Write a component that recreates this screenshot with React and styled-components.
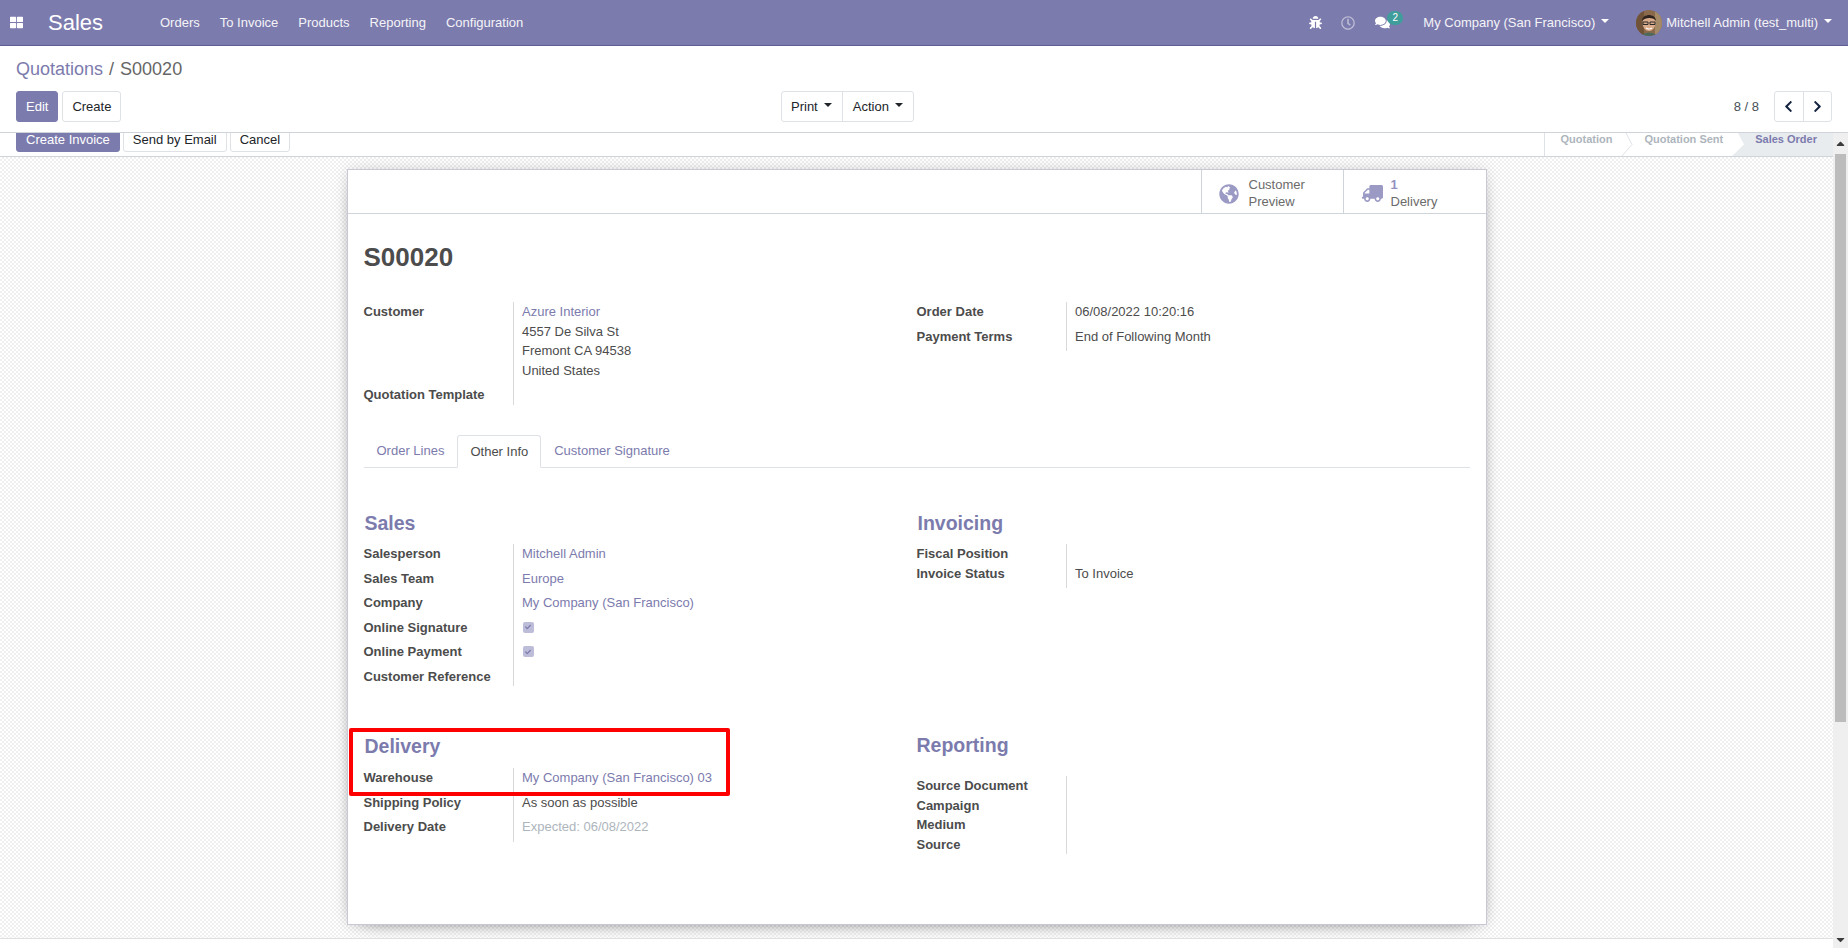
import React from "react";
import styled, { createGlobalStyle } from "styled-components";
import { FaBug, FaRegClock, FaComments, FaGlobeAmericas, FaTruck, FaChevronLeft, FaChevronRight, FaThLarge, FaCheck, FaCaretUp, FaCaretDown } from "react-icons/fa";

const Global = createGlobalStyle`
  html, body { margin: 0; height: 100%; overflow: hidden; }
  body { font-family: "Liberation Sans", Arial, sans-serif; font-size: 13px; line-height: 19.5px; color: #4c4c4c; background: #fff; }
  * { box-sizing: border-box; }
`;
const primary = "#7c7bad";

const Page = styled.div`display: flex; flex-direction: column; height: 948px; width: 1848px; overflow: hidden;`;
const Navbar = styled.header`
  height: 46px; flex: none; display: flex; align-items: center; background: ${primary};
  border-bottom: 1px solid #5f5e97; color: #fff; padding-right: 16px;
`;
const AppsIcon = styled.span`display: flex; margin: 0 26px 0 10px; font-size: 13px;`;
const Brand = styled.span`font-size: 22px; width: 47px; margin-right: 7px; margin-left: -1px; white-space: nowrap; padding-right: 48px; box-sizing: content-box;`;
const NavItem = styled.span`padding: 0 10px; color: #f4f4f8; white-space: nowrap;`;
const Spacer = styled.span`flex: 1;`;
const NavIcon = styled.span`display: flex; position: relative; margin-right: ${(p) => p.$mr}px; font-size: ${(p) => p.$size || 14}px; opacity: ${(p) => p.$dim ? 0.5 : 1};`;
const Badge = styled.span`
  position: absolute; left: 12px; top: -4px; width: 16px; height: 14px; border-radius: 7px;
  background: #3f9d9c; color: #fff; font-size: 10px; line-height: 14px; text-align: center;
`;
const NavLabel = styled.span`white-space: nowrap; color: #f4f4f8;`;
const Caret = styled.span`
  display: inline-block; border-top: 4px solid currentColor; border-left: 4px solid transparent; border-right: 4px solid transparent;
  margin-left: ${(p) => p.$ml || 6}px; margin-bottom: 3px;
`;
const CompanyMenu = styled.span`display: flex; align-items: center; margin-right: 27px;`;
const Avatar = styled.svg`width: 26px; height: 26px; border-radius: 50%; margin-right: 4px; flex: none;`;

const ControlPanel = styled.section`
  height: 87px; flex: none; background: #fff; border-bottom: 1px solid #ced4da; padding: 10px 16px 0; position: relative; z-index: 2;
`;
const Breadcrumb = styled.div`font-size: 18px; line-height: 27px; height: 35px; color: #666; white-space: nowrap;`;
const Crumb = styled.span`color: ${primary};`;
const CrumbSep = styled.span`margin: 0 6px 0 6px;`;
const PanelRow = styled.div`display: grid; grid-template-columns: 765px auto 1fr; align-items: center;`;
const Buttons = styled.div`display: flex; gap: 4px;`;
const Button = styled.button`
  font: inherit; height: 31px; padding: 0 9px; border-radius: 3px; white-space: nowrap;
  color: ${(p) => (p.$primary ? "#fff" : "#212529")}; background: ${(p) => (p.$primary ? primary : "#fff")};
  border: 1px solid ${(p) => (p.$primary ? primary : "#dee2e6")};
`;
const StatusButton = styled(Button)`height: 24px; line-height: 14px;`;
const BtnGroup = styled.div`display: flex; border: 1px solid #dee2e6; border-radius: 3px; height: 31px; color: #212529;`;
const GroupItem = styled.span`
  display: flex; align-items: center; padding: 0 10px; &:first-child { padding-left: 9px; } & + & { border-left: 1px solid #dee2e6; }
`;
const Pager = styled.div`display: flex; justify-content: flex-end; align-items: center; gap: 15px; color: #495057;`;
const PagerText = styled.span`white-space: nowrap;`;
const PagerGroup = styled(BtnGroup)`color: #14233f; width: 58px;`;
const PagerBtn = styled.span`
  flex: 1; display: flex; align-items: center; justify-content: center; font-size: 13px;
  & + & { border-left: 1px solid #dee2e6; }
`;

const Body = styled.div`flex: 1; min-height: 0; display: flex;`;
const Main = styled.div`flex: 1; min-width: 0; display: flex; flex-direction: column; overflow: hidden;`;
const Statusbar = styled.div`
  height: 24px; flex: none; display: flex; justify-content: space-between; background: #fff; border-bottom: 1px solid #ced4da; padding-left: 16px; overflow: hidden;
`;
const StatusButtons = styled.div`display: flex; gap: 3px; margin-top: -5px; height: 24px;`;
const Stages = styled.div`display: flex; height: 23px; border-left: 1px solid #dee2e6; font-size: 11px; font-weight: bold; color: #adb5bd; line-height: 13px;`;
const Stage = styled.span`
  display: block; padding-left: ${(p) => p.$pl}px; padding-right: ${(p) => p.$pr}px; white-space: nowrap;
  background: ${(p) => (p.$active ? "#e9ecef" : "transparent")}; color: ${(p) => (p.$active ? primary : "inherit")};
`;
const Chevron = styled.svg`width: 13px; height: 23px; flex: none; display: block;`;

const Canvas = styled.div`
  flex: 1; min-height: 0; padding-top: 12px; overflow: hidden;
  background-color: #fff;
  background-image: repeating-conic-gradient(#f0f0f0 0 25%, #fff 0 50%);
  background-size: 4px 4px;
`;
const Sheet = styled.main`
  width: 1140px; height: 756px; margin: 0 auto; background: #fff; border: 1px solid #c8c9d4; box-shadow: 0 5px 20px -15px #000, 0 0 14px rgba(0,0,0,.12);
  position: relative;
`;
const ButtonBox = styled.div`height: 44px; display: flex; justify-content: flex-end; border-bottom: 1px solid #ced4da;`;
const StatButton = styled.div`
  width: ${(p) => p.$w}px; display: flex; align-items: center; gap: ${(p) => p.$gap}px; border-left: 1px solid #ced4da; padding: 4px 0 0 ${(p) => p.$pl}px;
  line-height: 16.5px; color: #6b6b6b; svg { color: #9b9ac4; flex: none; }
`;
const FlippedTruck = styled(FaTruck)`transform: scaleX(-1);`;
const StatValue = styled.div`font-weight: bold; color: #9392bf;`;
const Content = styled.div`padding: 0 16px 0 16px;`;
const Title = styled.h1`margin: 0; padding-top: 28px; height: 88px; font-size: 26px; line-height: 30px; font-weight: bold; color: #4c4c4c;`;
const TwoCols = styled.div`display: grid; grid-template-columns: 553px 1fr; padding-top: ${(p) => p.$pt || 0}px;`;
const Group = styled.div`display: grid; grid-template-columns: 150px 1fr; align-content: start;`;
const Label = styled.div`font-weight: bold; border-right: 1px solid #d9d9d9; white-space: nowrap;`;
const Value = styled.div`padding: 0 0 ${(p) => (p.$empty ? 0 : 5)}px 8.5px; color: ${(p) => p.$muted ? "#adb5bd" : "inherit"}; white-space: nowrap;`;
const Link = styled.span`color: ${primary}; white-space: nowrap;`;
const AddressLine = styled.div`white-space: nowrap;`;
const Tabs = styled.nav`display: flex; height: 33px; margin-top: 30px; border-bottom: 1px solid #dee2e6;`;
const Tab = styled.span`
  height: 33px; padding: 6px 13px 0; white-space: nowrap; color: ${(p) => (p.$active ? "#4c4c4c" : primary)};
  ${(p) => p.$active && `background:#fff;border:1px solid #dee2e6;border-bottom-color:#fff;border-radius:3px 3px 0 0;padding-left:12px;padding-right:12px;`}
`;
const Section = styled.div``;
const Heading = styled.h2`
  margin: ${(p) => p.$mt || 0}px 0 ${(p) => p.$mb}px; height: 30px; line-height: 30px; font-size: 19.5px; font-weight: bold; color: ${primary}; padding-left: ${(p) => p.$pl || 0}px;
`;
const Checkbox = styled.span`
  display: flex; align-items: center; justify-content: center; width: 11px; height: 11px; margin: 4px 0 4.5px 0.5px; border-radius: 2px; background: #bdbcd9; color: ${primary}; font-size: 6px;
`;
const RedBox = styled.div`
  position: absolute; left: 1px; top: 558px; width: 381px; height: 68px; border: 4px solid #f00; border-radius: 2px; pointer-events: none;
`;
const Footer = styled.div`height: 10px; flex: none; background: #fff; border-top: 1px solid #e0e0e0;`;
const Scrollbar = styled.div`width: 15px; flex: none; background: #efefef; display: flex; flex-direction: column; align-items: center;`;
const ScrollArrow = styled.span`height: ${(p) => p.$h}px; display: flex; align-items: center; justify-content: center; color: #3c3c3c; font-size: 13px; flex: none;`;
const ScrollThumb = styled.div`width: 11px; height: 568px; background: #bcbcbc; flex: none;`;
const ScrollRest = styled.div`flex: 1;`;

function FaceAvatar() {
  return (
    <Avatar viewBox="0 0 26 26">
      <rect width="26" height="26" fill="#8a6a4a" />
      <rect x="0" y="0" width="8" height="26" fill="#6f5238" />
      <rect x="19" y="0" width="7" height="26" fill="#a58a68" />
      <ellipse cx="13" cy="13" rx="6.5" ry="8" fill="#d9ab8a" />
      <path d="M6 11 C6 3 20 3 20 11 C18 7 9 7 6 11Z" fill="#2f241d" />
      <path d="M7 12h5v2.5H7zM14 12h5v2.5h-5z" fill="none" stroke="#2a2a2a" strokeWidth="1" />
      <path d="M10 18 Q13 20 16 18" stroke="#fff" strokeWidth="1.2" fill="none" />
      <path d="M3 26 Q13 19 23 26Z" fill="#4b6a5c" />
    </Avatar>
  );
}

export default function App() {
  return (
    <Page>
      <Global />
      <Navbar>
        <AppsIcon><FaThLarge /></AppsIcon>
        <Brand>Sales</Brand>
        <NavItem>Orders</NavItem>
        <NavItem>To Invoice</NavItem>
        <NavItem>Products</NavItem>
        <NavItem>Reporting</NavItem>
        <NavItem>Configuration</NavItem>
        <Spacer />
        <NavIcon $mr={19} $size={13}><FaBug /></NavIcon>
        <NavIcon $mr={20} $dim><FaRegClock /></NavIcon>
        <NavIcon $mr={33} $size={15}><FaComments /><Badge>2</Badge></NavIcon>
        <CompanyMenu><NavLabel>My Company (San Francisco)</NavLabel><Caret /></CompanyMenu>
        <FaceAvatar />
        <NavLabel>Mitchell Admin (test_multi)</NavLabel><Caret />
      </Navbar>
      <ControlPanel>
        <Breadcrumb><Crumb>Quotations</Crumb><CrumbSep>/</CrumbSep>S00020</Breadcrumb>
        <PanelRow>
          <Buttons>
            <Button $primary>Edit</Button>
            <Button>Create</Button>
          </Buttons>
          <BtnGroup>
            <GroupItem>Print<Caret /></GroupItem>
            <GroupItem>Action<Caret /></GroupItem>
          </BtnGroup>
          <Pager>
            <PagerText>8 / 8</PagerText>
            <PagerGroup>
              <PagerBtn><FaChevronLeft /></PagerBtn>
              <PagerBtn><FaChevronRight /></PagerBtn>
            </PagerGroup>
          </Pager>
        </PanelRow>
      </ControlPanel>
      <Body>
        <Main>
          <Statusbar>
            <StatusButtons>
              <StatusButton $primary>Create Invoice</StatusButton>
              <StatusButton>Send by Email</StatusButton>
              <StatusButton>Cancel</StatusButton>
            </StatusButtons>
            <Stages>
              <Stage $pl={15} $pr={10}>Quotation</Stage>
              <Chevron viewBox="0 0 13 24" preserveAspectRatio="none"><path d="M4 0 L10 12 L0 24" fill="none" stroke="#dee2e6" /></Chevron>
              <Stage $pl={9} $pr={9}>Quotation Sent</Stage>
              <Chevron viewBox="0 0 13 24" preserveAspectRatio="none"><path d="M6 0 H13 V24 H0 L12 12Z" fill="#e9ecef" /></Chevron>
              <Stage $active $pl={10} $pr={16}>Sales Order</Stage>
            </Stages>
          </Statusbar>
          <Canvas>
            <Sheet>
              <ButtonBox>
                <StatButton $w={142} $gap={10} $pl={17}><FaGlobeAmericas size={20} /><div>Customer<br />Preview</div></StatButton>
                <StatButton $w={143} $gap={8} $pl={18}><FlippedTruck size={21} /><div><StatValue>1</StatValue>Delivery</div></StatButton>
              </ButtonBox>
              <Content>
                <Title>S00020</Title>
                <TwoCols>
                  <Group>
                    <Label>Customer</Label>
                    <Value>
                      <Link>Azure Interior</Link>
                      <AddressLine>4557 De Silva St</AddressLine>
                      <AddressLine>Fremont CA 94538</AddressLine>
                      <AddressLine>United States</AddressLine>
                    </Value>
                    <Label>Quotation Template</Label><Value $empty />
                  </Group>
                  <Group>
                    <Label>Order Date</Label><Value>06/08/2022 10:20:16</Value>
                    <Label>Payment Terms</Label><Value>End of Following Month</Value>
                  </Group>
                </TwoCols>
                <Tabs>
                  <Tab>Order Lines</Tab>
                  <Tab $active>Other Info</Tab>
                  <Tab>Customer Signature</Tab>
                </Tabs>
                <TwoCols $pt={40.5}>
                  <Section>
                    <Heading $mb={6} $pl={1}>Sales</Heading>
                    <Group>
                      <Label>Salesperson</Label><Value><Link>Mitchell Admin</Link></Value>
                      <Label>Sales Team</Label><Value><Link>Europe</Link></Value>
                      <Label>Company</Label><Value><Link>My Company (San Francisco)</Link></Value>
                      <Label>Online Signature</Label><Value><Checkbox><FaCheck /></Checkbox></Value>
                      <Label>Online Payment</Label><Value><Checkbox><FaCheck /></Checkbox></Value>
                      <Label>Customer Reference</Label><Value $empty />
                    </Group>
                  </Section>
                  <Section>
                    <Heading $mb={6} $pl={1}>Invoicing</Heading>
                    <Group>
                      <Label>Fiscal Position</Label><Value $empty />
                      <Label>Invoice Status</Label><Value>To Invoice</Value>
                    </Group>
                  </Section>
                </TwoCols>
                <TwoCols $pt={45}>
                  <Section>
                    <Heading $mb={7} $pl={1}>Delivery</Heading>
                    <Group>
                      <Label>Warehouse</Label><Value><Link>My Company (San Francisco) 03</Link></Value>
                      <Label>Shipping Policy</Label><Value>As soon as possible</Value>
                      <Label>Delivery Date</Label><Value $muted>Expected: 06/08/2022</Value>
                    </Group>
                  </Section>
                  <Section>
                    <Heading $mt={-1} $mb={16}>Reporting</Heading>
                    <Group>
                      <Label>Source Document</Label><Value $empty />
                      <Label>Campaign</Label><Value $empty />
                      <Label>Medium</Label><Value $empty />
                      <Label>Source</Label><Value $empty />
                    </Group>
                  </Section>
                </TwoCols>
              </Content>
              <RedBox />
            </Sheet>
          </Canvas>
          <Footer />
        </Main>
        <Scrollbar>
          <ScrollArrow $h={21}><FaCaretUp /></ScrollArrow>
          <ScrollThumb />
          <ScrollRest />
          <ScrollArrow $h={18}><FaCaretDown /></ScrollArrow>
        </Scrollbar>
      </Body>
    </Page>
  );
}
